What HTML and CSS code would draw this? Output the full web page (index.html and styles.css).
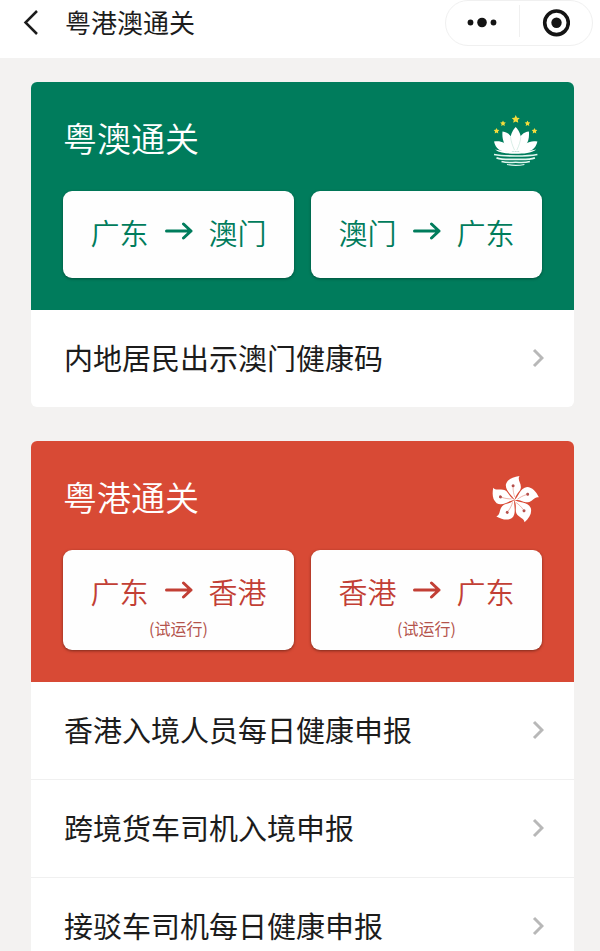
FILE: index.html
```html
<!DOCTYPE html>
<html lang="zh-CN">
<head>
<meta charset="utf-8">
<meta name="viewport" content="width=device-width, initial-scale=1">
<title>粤港澳通关</title>
<link rel="stylesheet" href="styles.css">
</head>
<body>
<svg class="defs" aria-hidden="true">
  <symbol id="arrow" viewBox="0 0 28 24"><path d="M1.500 11H26M18.500 4l7.500 7-7.500 7" fill="none" stroke="currentColor" stroke-width="3" stroke-linecap="round" stroke-linejoin="round"/></symbol>
  <symbol id="chevron" viewBox="0 0 12 20"><path d="M2 2l8 8-8 8" fill="none" stroke="currentColor" stroke-width="3"/></symbol>
  <symbol id="star" viewBox="-10 -10 20 20"><path d="M0-10L3-3.800 9.500-3.100 4.700 1.600 5.900 8.100 0 5-5.900 8.100-4.700 1.600-9.500-3.100-3-3.800z"/></symbol>
</svg>
<header class="bar">
  <button class="back" type="button" aria-label="返回">
    <svg width="16" height="26" viewBox="0 0 16 26"><path d="M14 1L2.500 12.500 14 24" fill="none" stroke="currentColor" stroke-width="2.500"/></svg>
  </button>
  <h1 class="bar-title">粤港澳通关</h1>
  <div class="capsule">
    <button type="button" aria-label="更多">
      <svg width="30" height="12" viewBox="0 0 30 12"><circle cx="3.500" cy="5.500" r="2.900"/><circle cx="15" cy="5.500" r="4.800"/><circle cx="26.500" cy="5.500" r="2.900"/></svg>
    </button>
    <button type="button" aria-label="关闭">
      <svg width="28" height="28" viewBox="0 0 28 28"><circle cx="14.500" cy="13.800" r="11.800" fill="none" stroke="currentColor" stroke-width="3.600"/><circle cx="14.500" cy="13.800" r="5.200"/></svg>
    </button>
  </div>
</header>
<main class="content">
  <section class="card macau">
    <div class="hero">
      <div class="hero-head">
        <h2>粤澳通关</h2>
        <svg class="emblem" viewBox="0 0 54 54" aria-hidden="true">
          <g fill="#f5dc3c">
            <use href="#star" x="23.500" y="2" width="8.500" height="8.500"/>
            <use href="#star" x="12" y="7.500" width="6" height="6"/>
            <use href="#star" x="36.500" y="7.500" width="6" height="6"/>
            <use href="#star" x="5.500" y="15" width="6" height="6"/>
            <use href="#star" x="43.500" y="15" width="6" height="6"/>
          </g>
          <g fill="#fff">
            <path d="M27.700 14C32 18.500 34.500 24 33 38.500H22.400C20.900 24 23.400 18.500 27.700 14z"/>
            <path d="M14.500 18.500C20 19 23.500 22.500 25 28L27 38.700C18 36 13.500 29 14.500 18.500zM40.900 18.500C35.400 19 31.900 22.500 30.400 28L28.400 38.700C37.400 36 41.900 29 40.900 18.500z"/>
            <path d="M6 28.500C13 27 20 30 24.500 38.700 14 40 8 37 6 28.500zM49.400 28.500C42.400 27 35.400 30 30.900 38.700 41.400 40 47.400 37 49.400 28.500z"/>
            <path d="M7 36.500C14 38 20 38.500 27.700 38.500S41.400 38 48.400 36.500C43 40.500 36 40.700 27.700 40.700S12.400 40.500 7 36.500z"/>
          </g>
          <g fill="none" stroke="#e2f7f0">
            <path d="M6 41.500C14 43 20 43 27.700 43S41.400 43 49.400 41.500" stroke-width="1.700"/>
            <path d="M8.500 44.800C15 47 21 46.300 27.700 46.300S40.400 47 46.900 44.800" stroke-width="1.800"/>
            <path d="M13.500 48.500C19 50 23 49.300 27.700 49.300S36.400 50 41.900 48.500" stroke-width="1.500"/>
            <path d="M19 51.500C24 52.500 31.400 52.500 36.400 51.500" stroke-width="1.200"/>
          </g>
          <path d="M22.500 24C23 28 24.500 33 26.500 37M32.900 24C32.400 28 30.900 33 28.900 37" fill="none" stroke="#b5dccf" stroke-width=".5"/>
        </svg>
      </div>
      <div class="routes">
        <button class="route" type="button"><span class="way"><span>广东</span><svg class="arrow"><use href="#arrow"/></svg><span>澳门</span></span></button>
        <button class="route" type="button"><span class="way"><span>澳门</span><svg class="arrow"><use href="#arrow"/></svg><span>广东</span></span></button>
      </div>
    </div>
    <nav class="rows">
      <a href="#code">内地居民出示澳门健康码<svg class="chevron"><use href="#chevron"/></svg></a>
    </nav>
  </section>
  <section class="card hongkong">
    <div class="hero">
      <div class="hero-head">
        <h2>粤港通关</h2>
        <svg class="emblem" viewBox="0 0 54 54" aria-hidden="true">
          <defs>
            <g id="petal">
              <path d="M0 0C-1-4-10-9-8.500-16 -6.500-21-2-23 5-24 2.500-20 7-17 6.300-12 5.500-8 1.500-6.500 0 0z" fill="#fff"/>
              <path d="M.2-3C-.8-6-1.500-9-1.400-13" fill="none" stroke="#e58a7c" stroke-width=".6"/>
              <circle cx="-1.400" cy="-14.300" r="1.500" fill="#b5504c"/>
            </g>
          </defs>
          <g transform="translate(26.500 28)">
            <use href="#petal"/>
            <use href="#petal" transform="rotate(72)"/>
            <use href="#petal" transform="rotate(144)"/>
            <use href="#petal" transform="rotate(216)"/>
            <use href="#petal" transform="rotate(288)"/>
          </g>
        </svg>
      </div>
      <div class="routes">
        <button class="route trial" type="button"><span class="way"><span>广东</span><svg class="arrow"><use href="#arrow"/></svg><span>香港</span></span><small>(试运行)</small></button>
        <button class="route trial" type="button"><span class="way"><span>香港</span><svg class="arrow"><use href="#arrow"/></svg><span>广东</span></span><small>(试运行)</small></button>
      </div>
    </div>
    <nav class="rows">
      <a href="#entry">香港入境人员每日健康申报<svg class="chevron"><use href="#chevron"/></svg></a>
      <a href="#truck">跨境货车司机入境申报<svg class="chevron"><use href="#chevron"/></svg></a>
      <a href="#shuttle">接驳车司机每日健康申报<svg class="chevron"><use href="#chevron"/></svg></a>
    </nav>
  </section>
</main>
</body>
</html>
```
FILE: styles.css
```css
* {
  box-sizing: border-box;
}

body {
  display: flex;
  flex-direction: column;
  height: 100vh;
  margin: 0;
  overflow: hidden;
  background: #f3f2f1;
  color: #1c1c1c;
  font-family: "Noto Sans CJK SC", sans-serif;
}

button {
  margin: 0;
  padding: 0;
  border: 0;
  background: none;
  color: inherit;
  font: inherit;
  cursor: pointer;
}

svg {
  display: block;
  flex: none;
}

.defs {
  position: absolute;
  width: 0;
  height: 0;
}

.bar {
  display: flex;
  flex: none;
  align-items: flex-start;
  padding: 0 7px 12px 23px;
  background: #fff;
}

.back {
  padding: 10px 0;
}

.bar-title {
  flex: 1;
  margin: 0 0 0 26px;
  font-size: 26px;
  font-weight: 400;
  line-height: 44px;
}

.capsule {
  display: flex;
  width: 148px;
  height: 46px;
  border: 1px solid #f0f0f0;
  border-radius: 23px;
  color: #141414;
}

.capsule button {
  display: flex;
  flex: 1;
  align-items: center;
  justify-content: center;
}

.capsule svg {
  fill: currentColor;
}

.capsule button + button {
  margin: 4px 0 8px;
  padding-top: 4px;
  border-left: 1px solid #f0f0f0;
}

.content {
  display: flex;
  flex: 1;
  flex-direction: column;
  gap: 34px;
  min-height: 0;
  padding: 24px 26px 34px 31px;
  overflow-y: auto;
  scrollbar-width: none;
}

.card {
  flex: none;
  overflow: hidden;
  border-radius: 6px;
  background: #fff;
}

.macau {
  --theme: #007c5c;
  --shadow: #00513c;
}

.hongkong {
  --theme: #d84a35;
  --ink: #c23f35;
  --shadow: #7c2a1c;
}

.hero {
  padding: 31px 32px 32px;
  background: var(--theme);
}

.hero-head {
  display: flex;
  align-items: flex-start;
  justify-content: space-between;
  margin-bottom: 24px;
}

.hero-head h2 {
  margin: 0;
  color: #fff;
  font-size: 34px;
  font-weight: 350;
  line-height: 50px;
}

.emblem {
  width: 54px;
  height: 54px;
}

.routes {
  display: grid;
  grid-template-columns: 1fr 1fr;
  gap: 17px;
}

.route {
  display: flex;
  flex-direction: column;
  align-items: center;
  padding: 21px 0 26px;
  border-radius: 9px;
  background: #fefefe;
  box-shadow: 0 1px 3px var(--shadow);
  color: var(--ink, var(--theme));
}

.trial {
  padding-bottom: 12px;
}

.way {
  display: flex;
  align-items: center;
  gap: 16px;
  font-size: 29px;
  font-weight: 350;
  line-height: 40px;
}

.arrow {
  width: 28px;
  height: 24px;
}

.route small {
  margin-top: 7px;
  color: #b4544c;
  font-size: 16px;
  line-height: 20px;
}

.rows a {
  display: flex;
  align-items: center;
  justify-content: space-between;
  padding: 0 30px 2px 33px;
  color: inherit;
  font-size: 29px;
  line-height: 95px;
  text-decoration: none;
}

.rows a + a {
  border-top: 1px solid #f0f0f0;
}

.chevron {
  width: 12px;
  height: 20px;
  color: #b8b8b8;
}
```
